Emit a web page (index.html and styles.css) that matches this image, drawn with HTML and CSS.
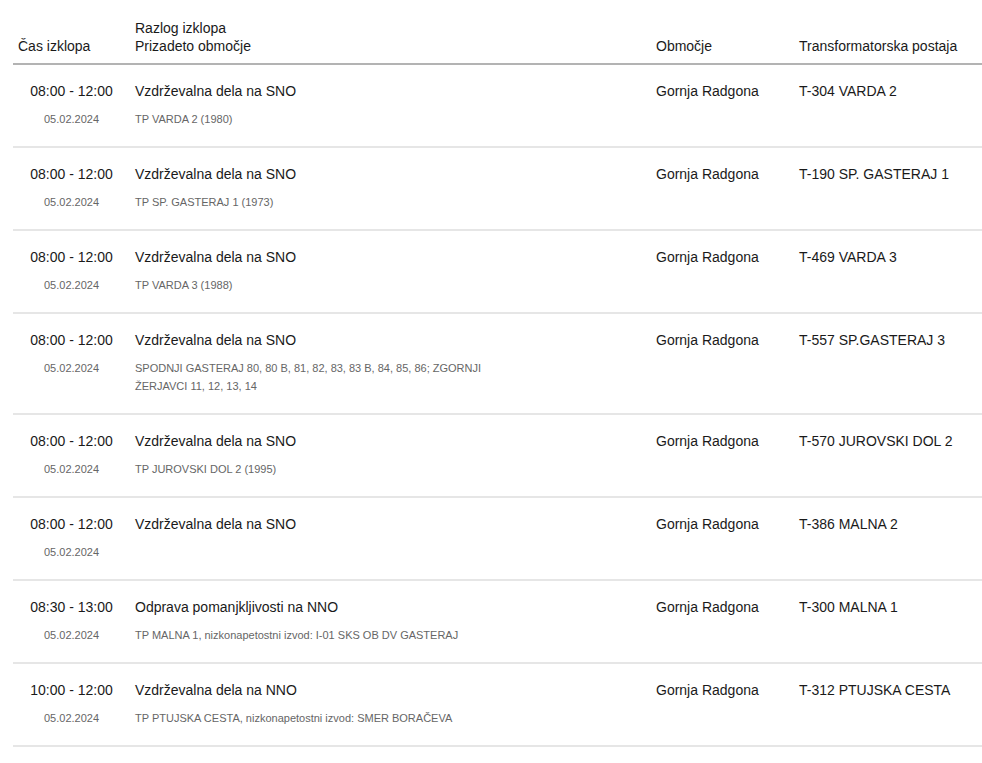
FILE: index.html
```html
<!DOCTYPE html>
<html lang="sl">
<head>
<meta charset="utf-8">
<link rel="stylesheet" href="styles.css">
</head>
<body>
<table class="outages">
  <colgroup>
    <col class="c-time"><col class="c-reason"><col class="c-area"><col class="c-station">
  </colgroup>
  <thead>
    <tr>
      <th>Čas izklopa</th>
      <th>Razlog izklopa<br>Prizadeto območje</th>
      <th>Območje</th>
      <th>Transformatorska postaja</th>
    </tr>
  </thead>
  <tbody>
    <tr>
      <td class="time"><div class="main">08:00 - 12:00</div><div class="sub">05.02.2024</div></td>
      <td><div class="main">Vzdrževalna dela na SNO</div><div class="sub">TP VARDA 2 (1980)</div></td>
      <td><div class="main">Gornja Radgona</div></td>
      <td><div class="main">T-304 VARDA 2</div></td>
    </tr>
    <tr>
      <td class="time"><div class="main">08:00 - 12:00</div><div class="sub">05.02.2024</div></td>
      <td><div class="main">Vzdrževalna dela na SNO</div><div class="sub">TP SP. GASTERAJ 1 (1973)</div></td>
      <td><div class="main">Gornja Radgona</div></td>
      <td><div class="main">T-190 SP. GASTERAJ 1</div></td>
    </tr>
    <tr>
      <td class="time"><div class="main">08:00 - 12:00</div><div class="sub">05.02.2024</div></td>
      <td><div class="main">Vzdrževalna dela na SNO</div><div class="sub">TP VARDA 3 (1988)</div></td>
      <td><div class="main">Gornja Radgona</div></td>
      <td><div class="main">T-469 VARDA 3</div></td>
    </tr>
    <tr>
      <td class="time"><div class="main">08:00 - 12:00</div><div class="sub">05.02.2024</div></td>
      <td><div class="main">Vzdrževalna dela na SNO</div><div class="sub narrow">SPODNJI GASTERAJ 80, 80 B, 81, 82, 83, 83 B, 84, 85, 86; ZGORNJI ŽERJAVCI 11, 12, 13, 14</div></td>
      <td><div class="main">Gornja Radgona</div></td>
      <td><div class="main">T-557 SP.GASTERAJ 3</div></td>
    </tr>
    <tr>
      <td class="time"><div class="main">08:00 - 12:00</div><div class="sub">05.02.2024</div></td>
      <td><div class="main">Vzdrževalna dela na SNO</div><div class="sub">TP JUROVSKI DOL 2 (1995)</div></td>
      <td><div class="main">Gornja Radgona</div></td>
      <td><div class="main">T-570 JUROVSKI DOL 2</div></td>
    </tr>
    <tr>
      <td class="time"><div class="main">08:00 - 12:00</div><div class="sub">05.02.2024</div></td>
      <td><div class="main">Vzdrževalna dela na SNO</div></td>
      <td><div class="main">Gornja Radgona</div></td>
      <td><div class="main">T-386 MALNA 2</div></td>
    </tr>
    <tr>
      <td class="time"><div class="main">08:30 - 13:00</div><div class="sub">05.02.2024</div></td>
      <td><div class="main">Odprava pomanjkljivosti na NNO</div><div class="sub">TP MALNA 1, nizkonapetostni izvod: I-01 SKS OB DV GASTERAJ</div></td>
      <td><div class="main">Gornja Radgona</div></td>
      <td><div class="main">T-300 MALNA 1</div></td>
    </tr>
    <tr>
      <td class="time"><div class="main">10:00 - 12:00</div><div class="sub">05.02.2024</div></td>
      <td><div class="main">Vzdrževalna dela na NNO</div><div class="sub">TP PTUJSKA CESTA, nizkonapetostni izvod: SMER BORAČEVA</div></td>
      <td><div class="main">Gornja Radgona</div></td>
      <td><div class="main">T-312 PTUJSKA CESTA</div></td>
    </tr>
  </tbody>
</table>
</body>
</html>
```

FILE: styles.css
```css
html, body {
  margin: 0;
  padding: 0;
  background: #fff;
}
body {
  padding-left: 13px;
  font-family: "Liberation Sans", Arial, sans-serif;
  font-size: 14px;
  color: #1a1a1a;
}
.outages {
  width: 969px;
  border-collapse: collapse;
  table-layout: fixed;
}
.c-time { width: 117px; }
.c-reason { width: 521px; }
.c-area { width: 143px; }
.c-station { width: 188px; }

.outages th {
  text-align: left;
  font-weight: normal;
  vertical-align: bottom;
  line-height: 18px;
  padding: 19px 5px 8px 5px;
  border-bottom: 2px solid #b3b3b3;
}
.outages td {
  vertical-align: top;
  padding: 16px 5px 18px 5px;
  border-bottom: 2px solid #e6e6e6;
}
.outages td.time {
  text-align: center;
}
.main {
  line-height: 20px;
  height: 20px;
}
.sub {
  margin-top: 9px;
  font-size: 11px;
  line-height: 18px;
  color: #666;
}
.sub.narrow {
  max-width: 360px;
}
```
